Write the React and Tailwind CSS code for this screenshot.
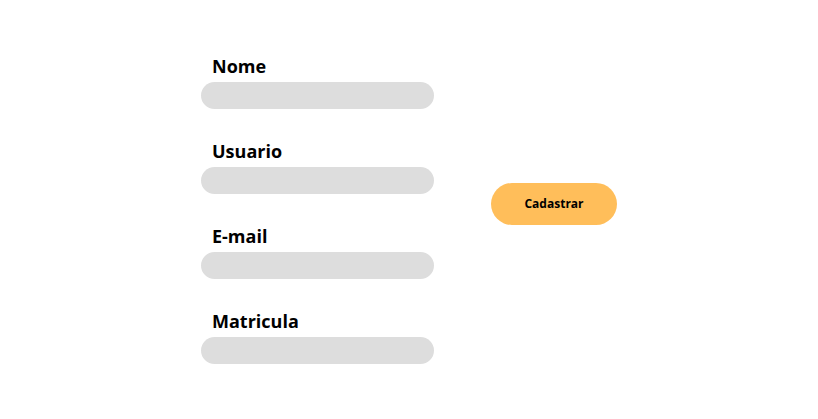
export default function App() {
  const fields = ["Nome", "Usuario", "E-mail", "Matricula"];

  return (
    <div
      className="w-[818px] h-[419px] bg-white flex justify-center items-center pb-[2px]"
      style={{ fontFamily: '"Open Sans", sans-serif' }}
    >
      <div className="flex items-center gap-[57px]">
        {/* Form fields */}
        <div className="flex flex-col gap-[30px]">
          {fields.map((label) => (
            <div key={label} className="flex flex-col gap-[4px]">
              <label className="pl-[11px] text-[18px] leading-[24px] font-bold text-black">
                {label}
              </label>
              <div className="w-[233px] h-[27px] rounded-full bg-[#dddddd]" />
            </div>
          ))}
        </div>

        {/* Submit */}
        <button className="w-[126px] h-[42px] rounded-full bg-[#ffbe5a] text-[12px] font-bold text-black mb-[10px]">
          Cadastrar
        </button>
      </div>
    </div>
  );
}
